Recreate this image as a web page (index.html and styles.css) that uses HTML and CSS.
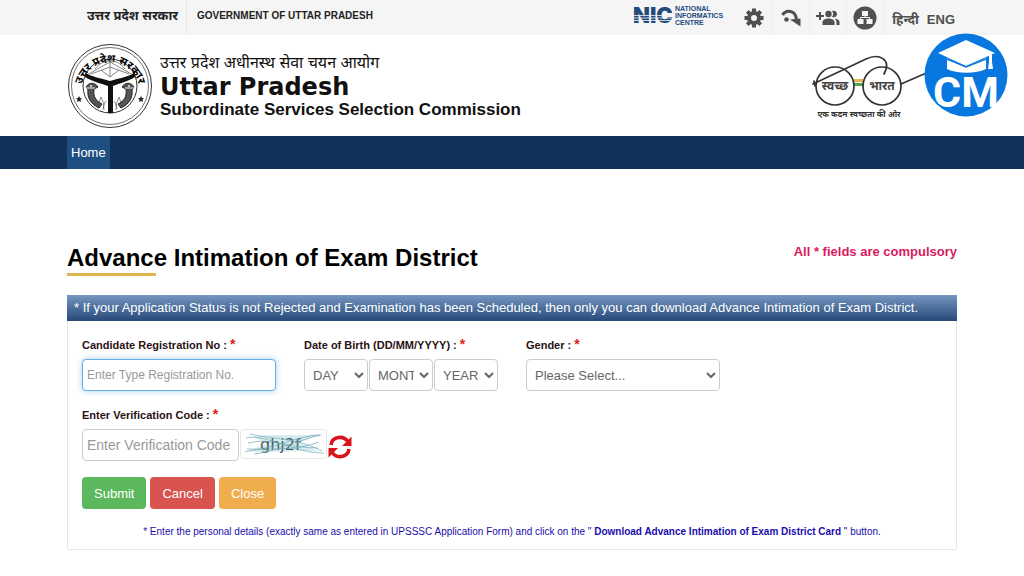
FILE: index.html
```
<!DOCTYPE html>
<html lang="en">
<head>
  <meta charset="UTF-8">
  <meta name="viewport" content="width=device-width, initial-scale=1">
  <title>Advance Intimation of Exam District</title>
  <link rel="stylesheet" href="styles.css">
</head>
<body>

  <div class="topbar">
    <div class="container topbar-inner">
      <div class="gov">
        <a href="#" class="gov-hi" lang="hi">उत्तर प्रदेश सरकार</a>
        <a href="#" class="gov-en">GOVERNMENT OF UTTAR PRADESH</a>
      </div>
      <div class="tools">
        <a href="#" class="nic" aria-label="National Informatics Centre">
          <svg width="96" height="22" viewBox="0 0 96 22">
            <text class="nic-mark" x="0" y="19">NIC</text>
            <path d="M0 11.500h39M0 14h39M0 16.500h39" stroke="#f5f5f5" stroke-width=".8"/>
            <text class="nic-name" x="42" y="7">NATIONAL</text>
            <text class="nic-name" x="42" y="14">INFORMATICS</text>
            <text class="nic-name" x="42" y="21">CENTRE</text>
          </svg>
        </a>
        <a href="#" class="tool" aria-label="Settings">
          <svg width="20" height="20" viewBox="0 0 20 20">
            <circle cx="10" cy="10" r="5" fill="none" stroke="#505050" stroke-width="4"/>
            <path d="M10 .5v4M10 15.500v4M.5 10h4M15.500 10h4M3.300 3.300l2.800 2.800M13.900 13.900l2.800 2.800M16.700 3.300l-2.800 2.800M6.100 13.900l-2.800 2.800" stroke="#505050" stroke-width="4"/>
          </svg>
        </a>
        <a href="#" class="tool" aria-label="Skip to main content">
          <svg width="20" height="20" viewBox="0 0 20 20">
            <path d="M1.500 7C5 1 15 2 15.500 12" fill="none" stroke="#505050" stroke-width="3"/>
            <path d="M9 11.500l10.500-1v8z" fill="#505050"/>
            <circle cx="5.500" cy="11.500" r="2.300" fill="#505050"/>
          </svg>
        </a>
        <a href="#" class="tool" aria-label="Social media">
          <svg width="24" height="20" viewBox="0 0 24 20" fill="#505050">
            <path d="M0 7h3V4h2v3h3v2H5v3H3V9H0z"/>
            <circle cx="12.500" cy="6" r="3.200"/>
            <path d="M6.500 17v-3c0-2 3-3.500 6-3.500s6 1.500 6 3.500v3z"/>
            <path d="M16 3c3-1 5 .7 5 3s-2 4-5 3c1.500-2 1.500-4 0-6zM18.500 10.800c3 .2 5 1.500 5 3.200v3h-3v-3c0-1.300-.8-2.400-2-3.200z"/>
          </svg>
        </a>
        <a href="#" class="tool" aria-label="Sitemap">
          <svg width="24" height="24" viewBox="0 0 24 24">
            <circle cx="12" cy="12" r="11.500" fill="#505050"/>
            <path d="M9 5h6v5H9zM4.500 13h6v5h-6zM13.500 13h6v5h-6z" fill="#f5f5f5"/>
            <path d="M12 9v2.500M7.500 14v-2.500h9V14" fill="none" stroke="#f5f5f5"/>
          </svg>
        </a>
        <a href="#" class="lang" lang="hi">हिन्दी</a>
        <a href="#" class="lang">ENG</a>
      </div>
    </div>
  </div>

  <header class="header">
    <div class="container header-inner">
      <svg class="emblem" width="86" height="86" viewBox="0 0 86 86" role="img" aria-label="Emblem of Uttar Pradesh">
        <g fill="none" stroke="#333">
          <circle cx="43" cy="43" r="41.500"/>
          <circle cx="43" cy="43" r="38.500" stroke-width=".7"/>
          <circle cx="43" cy="43" r="27"/>
        </g>
        <path id="ring" d="M14 45A29.200 29.200 0 0 1 72 45" fill="none"/>
        <text class="ring-text"><textPath href="#ring" startOffset="50%" text-anchor="middle">उत्तर प्रदेश सरकार</textPath></text>
        <g fill="none" stroke="#666" stroke-width=".8">
          <path d="M18 33L43 19 68 33M24 31L43 24l19 7M43 17v17M28 26c5-6 9-8 15-8s10 2 15 8M34 27l9 7 9-7"/>
          <path d="M33 65c-3-4 0-7 1-11 1 4 4 6 2 12M50 66c-2-6 1-8 2-12 1 4 4 7 1 11M37 67c-1-4 0-6 2-9M49 67c1-4 0-6-2-9"/>
        </g>
        <path d="M18 30c8 4 15 5 25 8 10-3 17-4 25-8v4c-8 5-15 6-22 9v27h-5V43c-8-3-15-4-23-9z" fill="#111"/>
        <g fill="#555" stroke="#222">
          <path d="M19 44c3-5 9-5 12 0l-4 2c-1 8 2 12 8 15l-3 4c-8-4-12-10-11-18z"/>
          <path d="M67 44c-3-5-9-5-12 0l4 2c1 8-2 12-8 15l3 4c8-4 12-10 11-18z"/>
          <path d="M18 45h10M58 45h10" stroke="#eee"/>
        </g>
        <g fill="#eee"><circle cx="24" cy="43" r="1"/><circle cx="62" cy="43" r="1"/></g>
        <path d="M12 53l1 2 2 .3-1.500 1.500.4 2.200-1.900-1-1.900 1 .4-2.200L9 55.300l2-.3zM74 53l1 2 2 .3-1.500 1.500.4 2.200-1.900-1-1.900 1 .4-2.200-1.500-1.500 2-.3z" fill="#222"/>
      </svg>
      <div class="brand">
        <span class="brand-hi" lang="hi">उत्तर प्रदेश अधीनस्थ सेवा चयन आयोग</span>
        <strong class="brand-state">Uttar Pradesh</strong>
        <span class="brand-name">Subordinate Services Selection Commission</span>
      </div>
      <svg class="swachh" width="146" height="70" viewBox="0 0 146 70" role="img" aria-label="Swachh Bharat">
        <path d="M43 28h9v3h-9z" fill="#e5b94e"/>
        <path d="M43 32h9v3h-9z" fill="#55a650"/>
        <g fill="none" stroke="#333" stroke-width="1.700" stroke-linecap="round">
          <circle cx="24" cy="35" r="19"/>
          <circle cx="71" cy="35" r="19"/>
          <path d="M2 33L55 8c13-6 26 0 18 15M90 33l30-13"/>
          <path d="M3 30l1 5"/>
        </g>
        <text class="lens-text" x="24" y="39" text-anchor="middle">स्वच्छ</text>
        <text class="lens-text" x="71" y="39" text-anchor="middle">भारत</text>
        <text class="swachh-line" x="48" y="66" text-anchor="middle">एक कदम स्वच्छता की ओर</text>
      </svg>
    </div>
    <svg class="cm-badge" width="84" height="84" viewBox="0 0 84 84" role="img" aria-label="CM">
      <circle cx="42" cy="42" r="41.500" fill="#0878e0"/>
      <g fill="#fff">
        <path d="M14 20L42 7l29 13-29 13z"/>
        <path d="M23 25l19 9 20-9v11c-10 5-29 5-39 0z"/>
        <path d="M65 21h3v8l1 7h-5l1-7z"/>
      </g>
      <path d="M23 26l19 8 20-8" fill="none" stroke="#0878e0" stroke-width="1.500"/>
      <text class="cm-text" x="42" y="74" text-anchor="middle">CM</text>
    </svg>
  </header>

  <nav class="nav">
    <div class="container nav-inner">
      <a href="#" class="nav-link">Home</a>
    </div>
  </nav>

  <main class="container main">
    <div class="title-row">
      <h1 class="title">Advance Intimation of Exam District</h1>
      <p class="compulsory">All * fields are compulsory</p>
    </div>

    <section class="panel">
      <h2 class="panel-head">* If your Application Status is not Rejected and Examination has been Scheduled, then only you can download Advance Intimation of Exam District.</h2>
      <form class="form">
        <div class="fields">
          <div class="field">
            <label class="label" for="regNo">Candidate Registration No : <span class="req">*</span></label>
            <input class="control active" id="regNo" type="text" placeholder="Enter Type Registration No.">
          </div>
          <div class="field">
            <label class="label" for="day">Date of Birth (DD/MM/YYYY) : <span class="req">*</span></label>
            <div class="dob">
              <select class="control" id="day"><option>DAY</option></select>
              <select class="control" id="month" aria-label="Month"><option>MONTH</option></select>
              <select class="control" id="year" aria-label="Year"><option>YEAR</option></select>
            </div>
          </div>
          <div class="field">
            <label class="label" for="gender">Gender : <span class="req">*</span></label>
            <select class="control" id="gender"><option>Please Select...</option></select>
          </div>
        </div>

        <div class="field">
          <label class="label" for="code">Enter Verification Code : <span class="req">*</span></label>
          <div class="verify">
            <input class="control code" id="code" type="text" placeholder="Enter Verification Code">
            <svg class="captcha" width="87" height="30" viewBox="0 0 87 30">
              <rect x=".5" y=".5" width="86" height="29" rx="3" fill="#fff" stroke="#e6e6e6"/>
              <path d="M12 8c20-4 44 0 68-3L60 14l20 9c-22-3-44 2-72-1l20-8z" fill="#d8ecef"/>
              <text class="captcha-text" x="20" y="21">ghj2f</text>
              <g fill="none" stroke="#6fa9b5" stroke-width=".7">
                <path d="M6 9c20-5 50 16 78 15M7 20c24 3 48-14 74-14M5 23c18-6 48 1 74-10M10 5c26 6 44 3 72 17M8 14c24-6 40 5 70 5M14 25c22-2 44-14 66-19"/>
              </g>
            </svg>
            <button class="refresh" type="button" aria-label="Refresh code">
              <svg width="24" height="24" viewBox="0 0 24 24">
                <path d="M3 10C4 1 16 0 20 7M21 14c-1 9-13 10-17 3" fill="none" stroke="#d9141a" stroke-width="3.500"/>
                <path d="M23.500 1.500V11H14zM.5 22.500V13H10z" fill="#d9141a"/>
              </svg>
            </button>
          </div>
        </div>

        <div class="buttons">
          <button class="btn btn-submit" type="button">Submit</button>
          <button class="btn btn-cancel" type="button">Cancel</button>
          <button class="btn btn-close" type="button">Close</button>
        </div>

        <p class="note">* Enter the personal details (exactly same as entered in UPSSSC Application Form) and click on the " <b>Download Advance Intimation of Exam District Card</b> " button.</p>
      </form>
    </section>
  </main>

</body>
</html>
```
FILE: styles.css
```
* {
  box-sizing: border-box;
}
body {
  margin: 0;
  font-family: "Liberation Sans", Arial, "Noto Sans", sans-serif;
  font-size: 13px;
  color: #222;
  background: #fff;
}
a {
  color: inherit;
  text-decoration: none;
}
.container {
  padding: 0 67px;
}

/* top bar */
.topbar {
  background: #f5f5f5;
}
.topbar-inner {
  display: flex;
  justify-content: space-between;
  height: 35px;
}
.gov {
  display: flex;
  align-items: center;
  font-weight: bold;
  line-height: 31px;
}
.gov-hi {
  padding: 0 8px 4px 20px;
  font-size: 13px;
  border-right: 1px solid #e8e8e8;
}
.gov-en {
  padding: 0 10px 4px;
  font-size: 10px;
}
.tools {
  display: flex;
  align-items: center;
  padding-right: 2px;
  color: #505050;
}
.tools svg {
  display: block;
  overflow: visible;
}
.nic {
  margin-right: 7px;
  padding-bottom: 6px;
}
.nic-mark {
  font: 900 22px Inter, sans-serif;
  fill: #234a7c;
}
.nic-name {
  font: bold 7px "Liberation Sans", Arial, sans-serif;
  fill: #234a7c;
}
.tool {
  display: flex;
  align-items: center;
  justify-content: center;
  width: 37px;
  height: 35px;
  border-right: 1px solid #eee;
}
.lang {
  margin-left: 8px;
  padding-top: 3px;
  font-size: 13px;
  font-weight: bold;
}

/* header */
.header {
  position: relative;
}
.header-inner {
  display: flex;
  align-items: center;
  height: 101px;
}
.brand {
  display: flex;
  flex-direction: column;
  margin-left: 7px;
  color: #111;
}
.brand-hi {
  font-size: 16px;
  line-height: 24px;
}
.brand-state {
  font-family: "DejaVu Sans", Verdana, sans-serif;
  font-size: 24px;
  line-height: 24px;
}
.brand-name {
  font-size: 17px;
  font-weight: bold;
  line-height: 22px;
}
.ring-text {
  font-size: 11px;
  font-weight: bold;
}
.swachh {
  margin-left: auto;
}
.lens-text {
  font-size: 12px;
  font-weight: bold;
  fill: #444;
}
.swachh-line {
  font-size: 8px;
  font-weight: bold;
  fill: #333;
}
.cm-badge {
  position: absolute;
  top: -2px;
  right: 16px;
}
.cm-text {
  font: bold 43px Roboto, sans-serif;
  fill: #fff;
}

/* menu */
.nav {
  background: #113259;
}
.nav-inner {
  display: flex;
}
.nav-link {
  padding: 0 4px;
  line-height: 33px;
  color: #fff;
  background: #1f4f82;
}

/* content */
.main {
  padding-top: 74px;
}
.title-row {
  display: flex;
  justify-content: space-between;
}
.title {
  margin: 0;
  font-size: 24px;
  line-height: 30px;
  color: #000;
}
.title::after {
  content: "";
  display: block;
  width: 89px;
  height: 3px;
  background: #deb44d;
}
.compulsory {
  margin: 0;
  font-size: 13px;
  font-weight: bold;
  line-height: 18px;
  color: #d81b60;
}
.panel {
  margin-top: 19px;
  border: 1px solid #e6e6e6;
  border-top: 0;
}
.panel-head {
  margin: 0 -1px;
  padding: 0 7px;
  font-size: 13px;
  font-weight: normal;
  line-height: 26px;
  color: #fff;
  background: linear-gradient(#7596bf, #26497a);
}
.form {
  padding: 15px 14px 10px;
}
.fields {
  display: grid;
  grid-template-columns: repeat(4, 1fr);
  column-gap: 28px;
  margin-bottom: 15px;
}
.label {
  display: block;
  height: 23px;
  font-size: 11px;
  font-weight: bold;
  line-height: 18px;
  color: #2a1215;
}
.req {
  font-size: 14px;
  line-height: 14px;
  color: #e02020;
}
.control {
  width: 100%;
  height: 32px;
  padding: 0 2px 0 4px;
  font: 13px "Liberation Sans", Arial, sans-serif;
  color: #666;
  background: #fff;
  border: 1px solid #ccc;
  border-radius: 4px;
}
.control::placeholder {
  color: #999;
}
.control.active {
  font-size: 12px;
  border-color: #66afe9;
  box-shadow: 0 0 6px rgba(102, 175, 233, .6);
}
.dob {
  display: flex;
  gap: 1px;
}
.verify {
  display: flex;
  align-items: flex-start;
  gap: 1px;
}
.control.code {
  width: 157px;
  font-size: 14px;
}
.captcha-text {
  font: 16px "DejaVu Sans", sans-serif;
  fill: #4a5a60;
}
.refresh {
  margin-top: 6px;
  padding: 0;
  background: none;
  border: none;
  cursor: pointer;
}
.refresh svg {
  display: block;
}
.buttons {
  display: flex;
  gap: 4px;
  margin-top: 16px;
}
.btn {
  height: 32px;
  padding: 0 12px;
  font: 13px "Liberation Sans", Arial, sans-serif;
  color: #fff;
  border: none;
  border-radius: 4px;
  cursor: pointer;
}
.btn-submit {
  background: #5cb85c;
}
.btn-cancel {
  background: #d9534f;
}
.btn-close {
  background: #f0ad4e;
}
.note {
  margin: 16px 0 0;
  font-size: 10px;
  line-height: 14px;
  text-align: center;
  color: #1a0dab;
}
```
